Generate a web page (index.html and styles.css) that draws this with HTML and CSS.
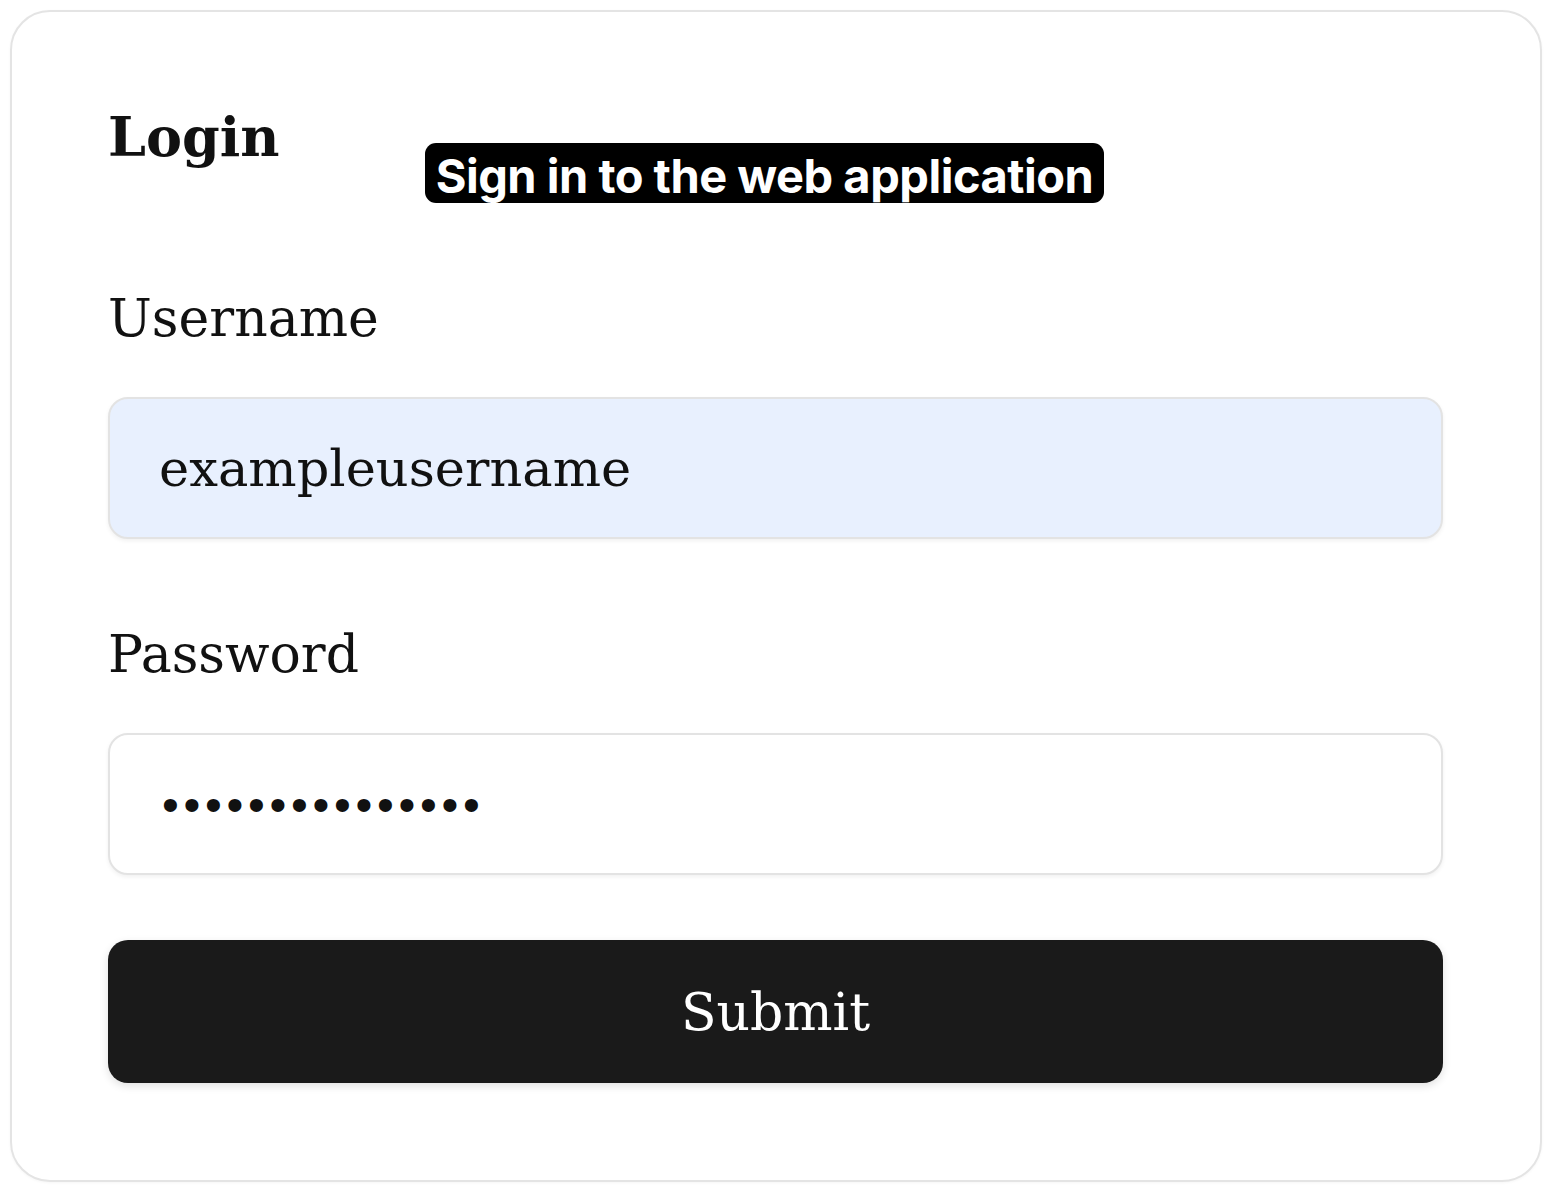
FILE: index.html
```html
<!DOCTYPE html>
<html lang="en">
<head>
<meta charset="utf-8">
<title>Login</title>
<link rel="stylesheet" href="styles.css">
</head>
<body>
<main class="card">
  <h1 class="title">Login</h1>
  <div class="tooltip">Sign in to the web application</div>
  <form class="form">
    <label class="label" for="username">Username</label>
    <input class="field field-autofill" id="username" type="text" value="exampleusername">
    <label class="label label-password" for="password">Password</label>
    <input class="field field-password" id="password" type="password" value="examplepassword">
    <button class="submit" type="button">Submit</button>
  </form>
</main>
</body>
</html>
```
FILE: styles.css
```css
html, body {
  margin: 0;
  padding: 0;
  background: #ffffff;
}
body {
  font-family: "DejaVu Serif", "Liberation Serif", serif;
  color: #111111;
}
.card {
  position: relative;
  box-sizing: border-box;
  margin: 10px;
  width: 1532px;
  height: 1172px;
  border: 2px solid #e4e4e4;
  border-radius: 40px;
  padding: 89px 97px 0 96px;
  background: #fff;
  box-shadow: 0 1px 3px rgba(0,0,0,0.04);
}
.title {
  margin: 0;
  font-size: 54px;
  line-height: 72px;
  font-weight: 700;
  color: #111;
}
.tooltip {
  position: absolute;
  left: 413px;
  top: 131px;
  box-sizing: border-box;
  width: 679px;
  height: 60px;
  padding-top: 6px;
  background: #000;
  color: #fff;
  border-radius: 11px;
  font-family: "Inter", "Liberation Sans", sans-serif;
  font-weight: 700;
  font-size: 47px;
  line-height: 54px;
  letter-spacing: -0.5px;
  text-align: center;
  white-space: nowrap;
}
.form {
  display: flex;
  flex-direction: column;
  margin-top: 115px;
}
.label {
  display: block;
  font-size: 52px;
  line-height: 60px;
  color: #111;
}
.field {
  box-sizing: border-box;
  margin-top: 49px;
  width: 100%;
  height: 142px;
  border: 2px solid #e3e3e3;
  border-radius: 20px;
  padding: 0 0 0 49px;
  font-family: "DejaVu Serif", "Liberation Serif", serif;
  font-size: 51px;
  color: #111;
  background: #fff;
  box-shadow: 0 2px 4px rgba(0,0,0,0.06);
  outline: none;
}
.field-autofill {
  background: #e8f0fe;
}
.label-password {
  margin-top: 85px;
}
.field-password {
  font-family: "Liberation Sans", sans-serif;
  font-size: 48px;
  letter-spacing: 4.7px;
  padding-left: 52px;
}
.submit {
  box-sizing: border-box;
  margin-top: 65px;
  width: 100%;
  height: 143px;
  border: none;
  border-radius: 20px;
  background: #1a1a1a;
  color: #fff;
  font-family: "DejaVu Serif", "Liberation Serif", serif;
  font-size: 52px;
  box-shadow: 0 3px 8px rgba(0,0,0,0.12);
  cursor: pointer;
}
```
